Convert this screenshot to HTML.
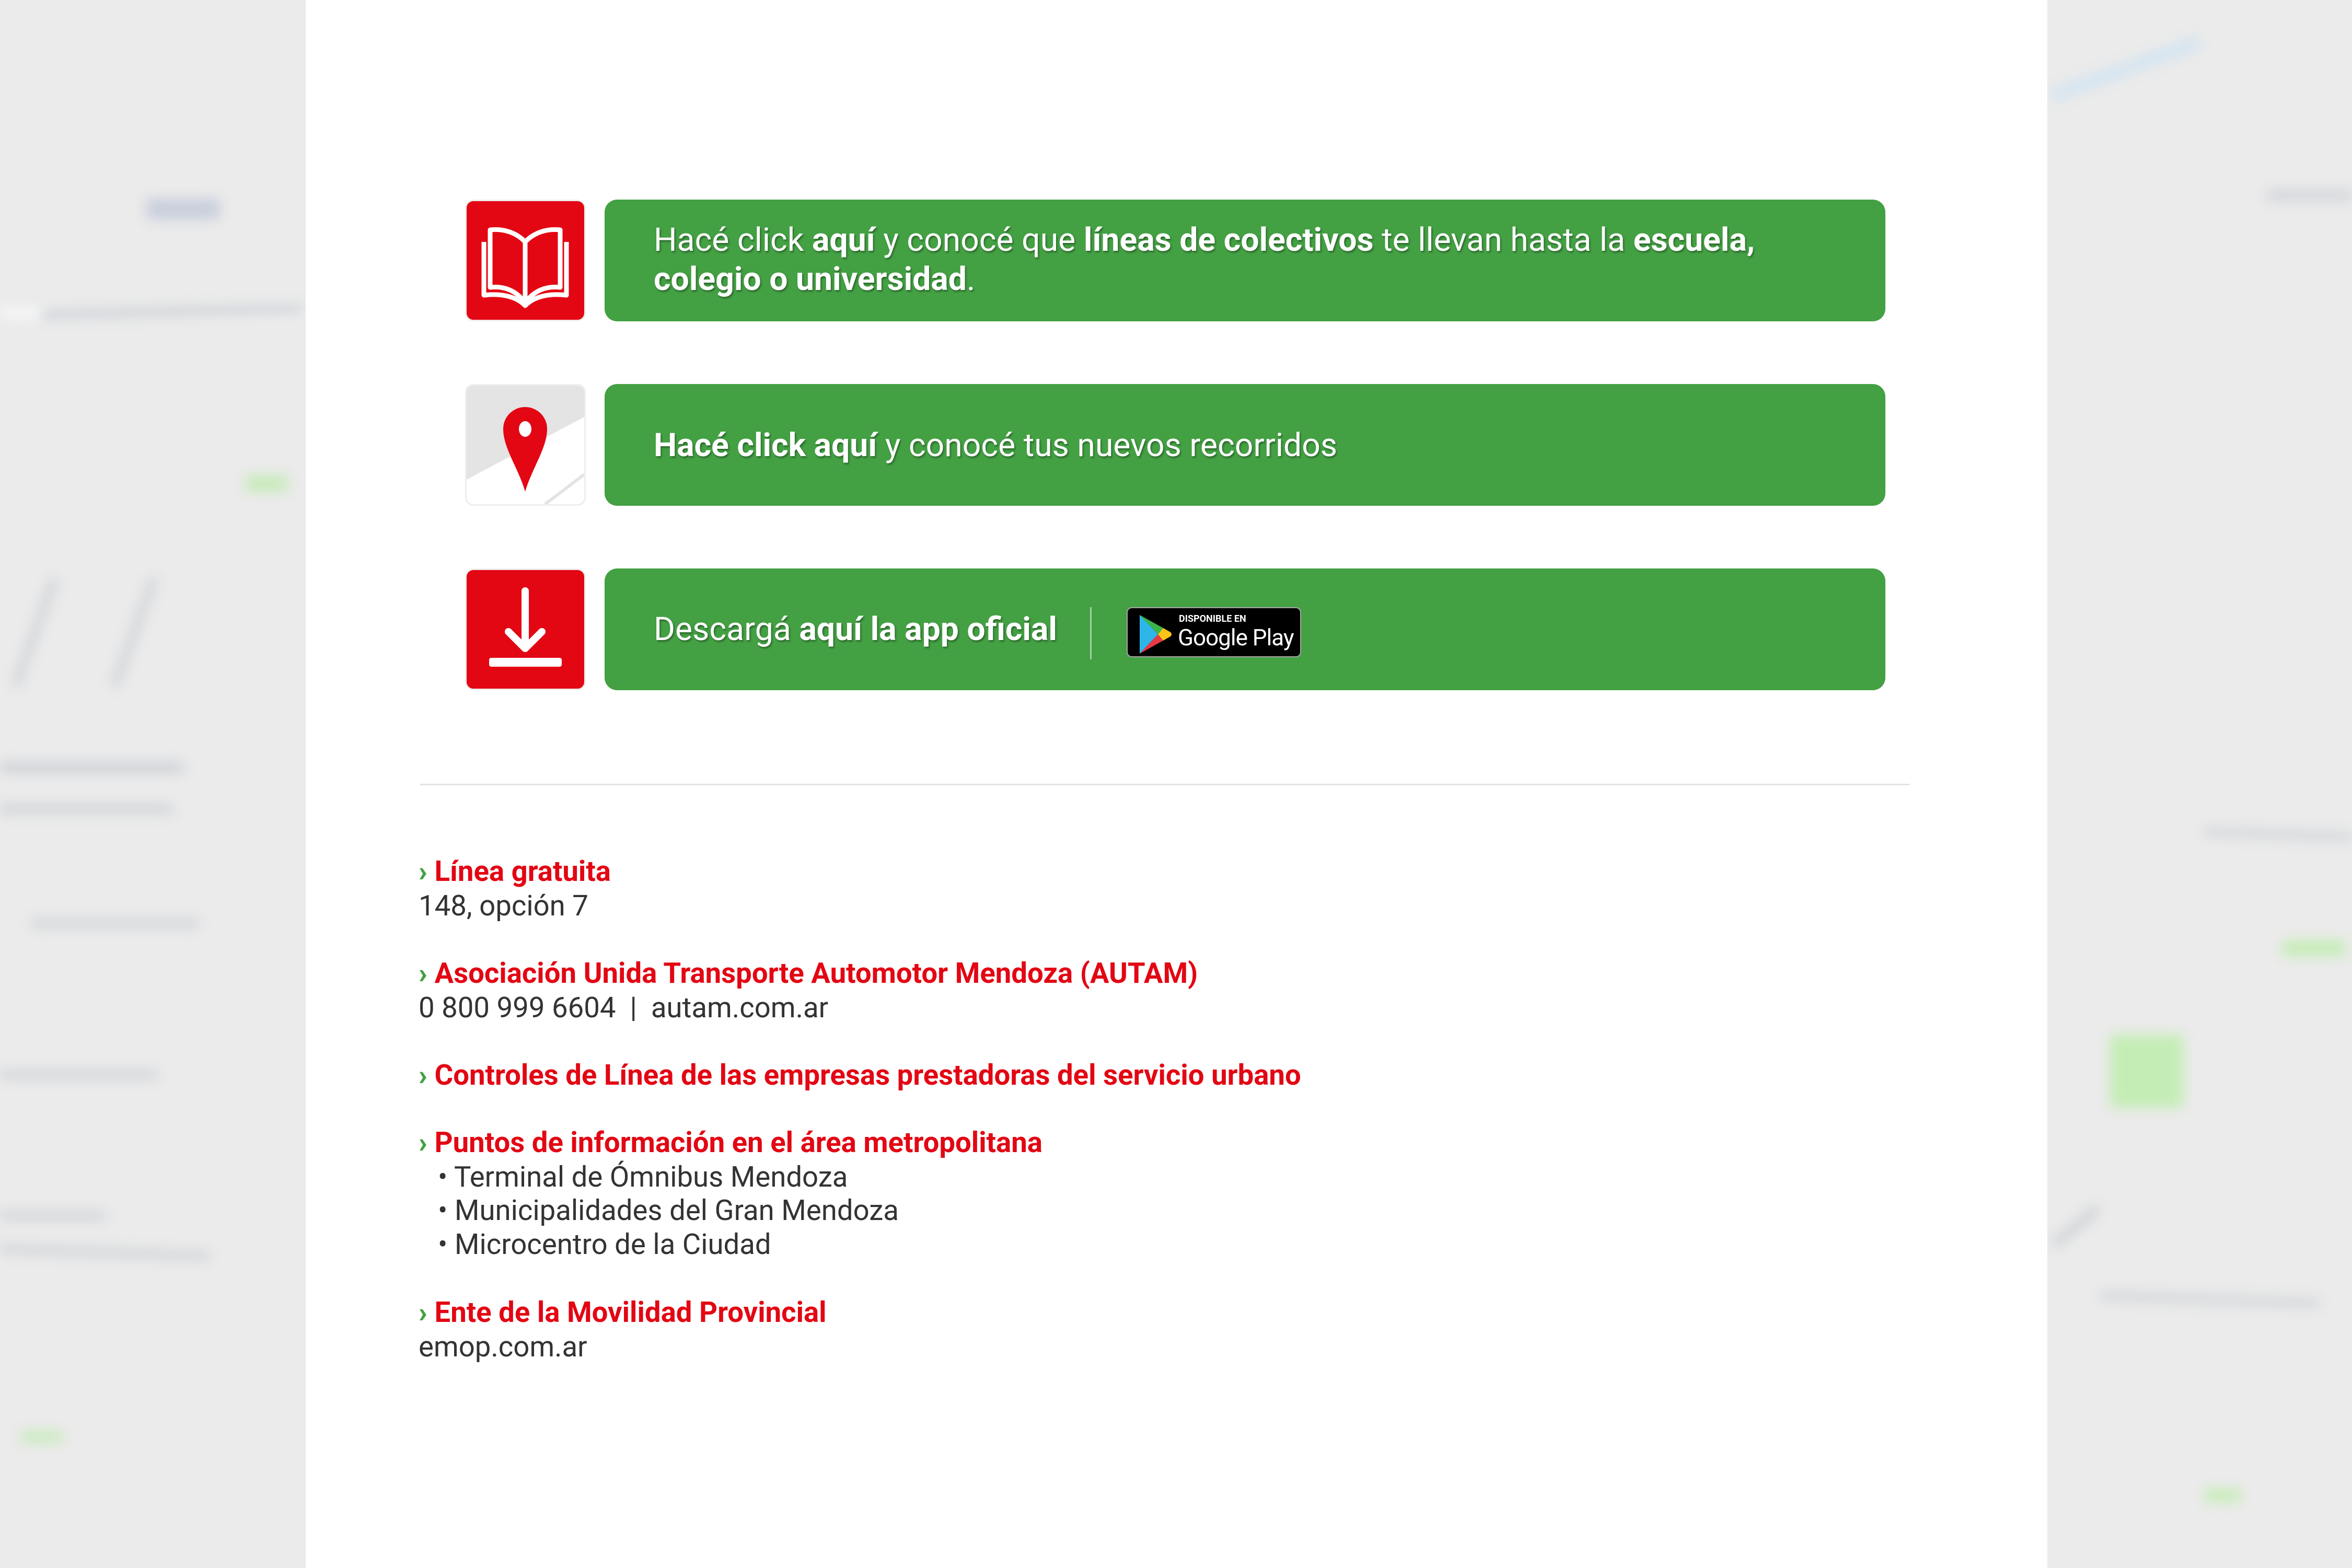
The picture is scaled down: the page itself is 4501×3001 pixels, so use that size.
<!DOCTYPE html>
<html><head><meta charset="utf-8"><style>
*{margin:0;padding:0;box-sizing:border-box}
body{width:4501px;height:3001px;position:relative;overflow:hidden;background:#ebebeb;font-family:"Roboto","Liberation Sans",sans-serif}
.map{position:absolute;top:0;height:3001px;overflow:hidden;filter:blur(12px)}
.map div{position:absolute}
#panel{position:absolute;left:585px;top:0;width:3333px;height:3001px;background:#fff}
.ib{position:absolute;left:890px;width:231px;height:233px;border-radius:16px;background:#e30613;border:3px solid #eee}
.bar{position:absolute;left:1157px;width:2451px;height:233px;border-radius:24px;background:#43a043;color:#fff;font-size:62.5px;text-shadow:2px 3px 3px rgba(0,0,0,.35)}
.bar .t{position:absolute;left:94px;white-space:nowrap}
.hr{position:absolute;left:804px;top:1500px;width:2850px;height:3px;background:#e3e3e3}
.f{position:absolute;left:801px;font-size:54.5px;line-height:66px;color:#333;white-space:nowrap}
.h{color:#e30613;font-weight:bold}
.h b{color:#43a043;margin-right:14px}
</style></head><body>
<div class="map" style="left:0;width:585px">
 <div style="left:0;top:590px;width:585px;height:18px;background:#f8f8f8"></div>
 <div style="left:80px;top:590px;width:500px;height:14px;background:#c6ccd3;transform:rotate(-1deg)"></div>
 <div style="left:0;top:1460px;width:350px;height:18px;background:#c9ced4"></div>
 <div style="left:0;top:1540px;width:330px;height:16px;background:#ccd0d6"></div>
 <div style="left:60px;top:1760px;width:320px;height:14px;background:#ccd0d6"></div>
 <div style="left:0;top:2050px;width:300px;height:14px;background:#ccd0d6"></div>
 <div style="left:0;top:2320px;width:200px;height:14px;background:#ccd0d6"></div>
 <div style="left:0;top:2390px;width:400px;height:14px;background:#ccd0d6;transform:rotate(2deg)"></div>
 <div style="left:470px;top:910px;width:80px;height:30px;background:#c5ebb8"></div>
 <div style="left:280px;top:380px;width:140px;height:40px;background:#c8cedc"></div>
 <div style="left:40px;top:2740px;width:80px;height:20px;background:#c5ebb8"></div>
 <div style="left:60px;top:1100px;width:14px;height:220px;background:#ccd0d6;transform:rotate(20deg)"></div>
 <div style="left:250px;top:1100px;width:14px;height:220px;background:#ccd0d6;transform:rotate(20deg)"></div>
</div>
<div class="map" style="left:3918px;width:583px">
 <div style="left:0;top:120px;width:300px;height:24px;background:#d3e4f1;transform:rotate(-20deg)"></div>
 <div style="left:420px;top:365px;width:180px;height:18px;background:#cfd2d8"></div>
 <div style="left:120px;top:1980px;width:140px;height:140px;background:#c4edb5"></div>
 <div style="left:300px;top:1590px;width:283px;height:14px;background:#cfd3d8;transform:rotate(2deg)"></div>
 <div style="left:450px;top:1800px;width:120px;height:30px;background:#c4edb5"></div>
 <div style="left:100px;top:2480px;width:420px;height:14px;background:#ced2d7;transform:rotate(2deg)"></div>
 <div style="left:0;top:2340px;width:110px;height:14px;background:#c7ccd2;transform:rotate(-40deg)"></div>
 <div style="left:300px;top:2850px;width:70px;height:24px;background:#c4edb5"></div>
</div>
<div id="panel"></div>

<!-- row 1 -->
<div class="ib" style="top:382px">
<svg width="225" height="227" viewBox="0 0 225 227"><g fill="none" stroke="#fff" stroke-width="9" stroke-linejoin="round">
<path d="M112 195 L112 78 C95 60 70 52 45 55 L45 165 C70 162 95 170 112 195 C129 170 154 162 179 165 L179 55 C154 52 129 60 112 78"/>
<path d="M33 78 L33 180 C65 176 95 182 112 200 C129 182 159 176 191 180 L191 78"/>
</g></svg></div>
<div class="bar" style="top:382px"><div class="t" style="top:40px;line-height:75px">Hacé click <b>aquí</b> y conocé que <b>líneas de colectivos</b> te llevan hasta la <b>escuela,<br>colegio o universidad</b>.</div></div>

<!-- row 2 -->
<div class="ib" style="top:735px;background:#e4e4e4;overflow:hidden">
<svg width="225" height="227" viewBox="0 0 225 227" style="position:absolute;left:0;top:0"><path d="M0 180 L225 60 L225 227 L0 227Z" fill="#fff"/><path d="M150 227 L225 170" stroke="#e4e4e4" stroke-width="6"/>
<path d="M112 203 C100 160 70 120 70 83 A42 42 0 0 1 154 83 C154 120 124 160 112 203Z" fill="#e30613"/><ellipse cx="112" cy="83" rx="12" ry="15" fill="#fff"/></svg></div>
<div class="bar" style="top:735px"><div class="t" style="top:80px;line-height:75px"><b>Hacé click aquí</b> y conocé tus nuevos recorridos</div></div>

<!-- row 3 -->
<div class="ib" style="top:1088px">
<svg width="225" height="227" viewBox="0 0 225 227"><path d="M112 40 L112 150 M80 118 L112 150 L144 118" fill="none" stroke="#fff" stroke-width="14" stroke-linecap="round" stroke-linejoin="round"/><rect x="43" y="168" width="139" height="17" rx="4" fill="#fff"/></svg></div>
<div class="bar" style="top:1088px"><div class="t" style="top:79px;line-height:75px">Descargá <b>aquí la app oficial</b></div>
<div style="position:absolute;left:929px;top:74px;width:3px;height:100px;background:rgba(255,255,255,.5)"></div>
<div style="position:absolute;left:999px;top:74px;width:334px;height:96px;background:#000;border:2px solid #a6a6a6;border-radius:10px;text-shadow:none">
<svg width="70" height="80" viewBox="0 0 70 80" style="position:absolute;left:18px;top:10px"><path d="M5 3 L40 40 L5 77Z" fill="#2fb6e8"/><path d="M5 3 L50 28 L40 40Z" fill="#3bb54a"/><path d="M5 77 L50 52 L40 40Z" fill="#e63946"/><path d="M50 28 L64 36 Q68 40 64 44 L50 52 L40 40Z" fill="#fcc419"/></svg>
<div style="position:absolute;left:98px;top:10px;font-size:18px;color:#fff;font-weight:bold">DISPONIBLE EN</div>
<div style="position:absolute;left:96px;top:30px;font-size:44px;color:#fff;letter-spacing:-1px">Google Play</div>
</div></div>

<div class="hr"></div>

<div class="f h" style="top:1635px"><b>›</b>Línea gratuita</div>
<div class="f" style="top:1701px">148, opción 7</div>
<div class="f h" style="top:1830px"><b>›</b>Asociación Unida Transporte Automotor Mendoza (AUTAM)</div>
<div class="f" style="top:1896px">0 800 999 6604 &nbsp;| &nbsp;autam.com.ar</div>
<div class="f h" style="top:2025px"><b>›</b>Controles de Línea de las empresas prestadoras del servicio urbano</div>
<div class="f h" style="top:2154px"><b>›</b>Puntos de información en el área metropolitana</div>
<div class="f" style="top:2220px;left:838px">• Terminal de Ómnibus Mendoza</div>
<div class="f" style="top:2284px;left:838px">• Municipalidades del Gran Mendoza</div>
<div class="f" style="top:2349px;left:838px">• Microcentro de la Ciudad</div>
<div class="f h" style="top:2479px"><b>›</b>Ente de la Movilidad Provincial</div>
<div class="f" style="top:2545px">emop.com.ar</div>
</body></html>
